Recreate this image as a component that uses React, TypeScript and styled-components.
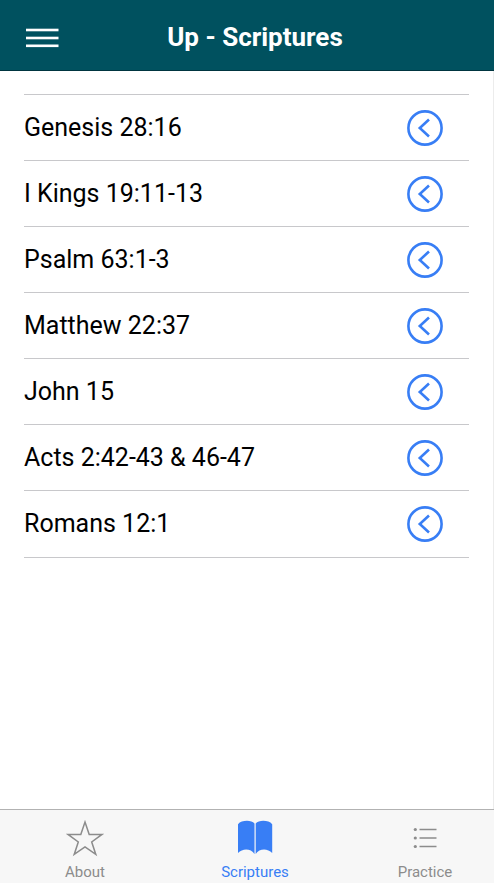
import React from "react";
import styled, { createGlobalStyle } from "styled-components";

const GlobalStyle = createGlobalStyle`
  * { box-sizing: border-box; }
  body {
    margin: 0;
    background: #fff;
    color: #000;
    font-family: Roboto, "Liberation Sans", sans-serif;
  }
`;

const Page = styled.div`
  display: flex;
  flex-direction: column;
  min-height: 100vh;
  overflow: hidden;
`;

const Header = styled.header`
  display: grid;
  grid-template-columns: 64px 1fr 64px;
  align-items: center;
  height: 71px;
  padding: 6px 16px 0;
  margin-right: -16px;
  background: #00515f;
  border-bottom: 1px solid #003540;
`;

const MenuButton = styled.button`
  display: flex;
  width: 52px;
  height: 52px;
  padding: 0 0 0 10px;
  align-items: center;
  border: 0;
  background: transparent;
  color: #fff;
  cursor: pointer;
`;

const Title = styled.h1`
  margin: 0;
  padding-bottom: 3px;
  color: #fff;
  font-size: 26px;
  line-height: 32px;
  font-weight: 700;
  text-align: center;
`;

const Main = styled.main`
  flex: 1;
  padding: 23px 24px 24px;
  border-right: 1px solid #ececec;
`;

const List = styled.ul`
  margin: 0;
  padding: 0;
  list-style: none;
  border-top: 1px solid #c8c8cb;
`;

const Row = styled.li`
  border-bottom: 1px solid #c8c8cb;

  &:last-child { padding-bottom: 1px; }
`;

const RowButton = styled.button`
  display: flex;
  width: 100%;
  height: 65px;
  padding: 0 26px 0 0;
  align-items: center;
  justify-content: space-between;
  border: 0;
  background: transparent;
  color: #000;
  font: inherit;
  font-size: 25px;
  line-height: 32px;
  text-align: left;
  cursor: pointer;

  svg { color: #387ef5; flex: none; }
`;

const TabBar = styled.nav`
  display: grid;
  grid-template-columns: repeat(3, 1fr);
  height: 74px;
  margin-right: -16px;
  background: #f7f7f7;
  border-top: 1px solid #b2b2b2;
`;

const Tab = styled.a<{ $active?: boolean }>`
  display: flex;
  flex-direction: column;
  align-items: center;
  padding-top: 8px;
  gap: 4px;
  color: ${(p) => (p.$active ? "#387ef5" : "#8c8c8c")};
  font-size: 15px;
  line-height: 20px;
  text-decoration: none;
`;

const MenuIcon = () => (
  <svg width="34" height="20" viewBox="0 0 34 20" fill="currentColor" aria-hidden="true">
    <rect x="0" y="0.7" width="32.5" height="2.6" />
    <rect x="0" y="8.7" width="32.5" height="2.6" />
    <rect x="0" y="16.5" width="32.5" height="2.6" />
  </svg>
);

const BackCircle = () => (
  <svg width="36" height="36" viewBox="0 0 36 36" fill="none" stroke="currentColor" strokeWidth="2.6" aria-hidden="true">
    <circle cx="18" cy="18" r="16.6" />
    <path d="M22 9.5 12.8 18l9.2 8.5" />
  </svg>
);

const StarIcon = () => (
  <svg width="40" height="40" viewBox="0 0 40 40" fill="none" stroke="currentColor" strokeWidth="1.5" aria-hidden="true">
    <path d="M20 4 24.2 16.4H37L26.7 24 30.8 36.4 20 28.8 9.2 36.4 13.3 24 3 16.4H15.8Z" />
  </svg>
);

const BookIcon = () => (
  <svg width="40" height="40" viewBox="0 0 40 40" fill="currentColor" aria-hidden="true">
    <path d="M19.5 5.4C16.5 1.9 6.5 1.9 3 6.2V35C7.6 30.2 15.8 30.2 19.5 36Z" />
    <path d="M20.7 5.4C23.7 1.9 33.7 1.9 37.2 6.2V35C32.6 30.2 24.4 30.2 20.7 36Z" />
  </svg>
);

const ListIcon = () => (
  <svg width="40" height="40" viewBox="0 0 40 40" fill="currentColor" aria-hidden="true">
    <circle cx="10.3" cy="11.5" r="1.6" />
    <circle cx="10.3" cy="20" r="1.6" />
    <circle cx="10.3" cy="28.5" r="1.6" />
    <path d="M14.5 10.8h17v1.4h-17zM14.5 19.3h17v1.4h-17zM14.5 27.8h17v1.4h-17z" />
  </svg>
);

const passages = [
  "Genesis 28:16",
  "I Kings 19:11-13",
  "Psalm 63:1-3",
  "Matthew 22:37",
  "John 15",
  "Acts 2:42-43 & 46-47",
  "Romans 12:1",
];

export default function App() {
  return (
    <>
      <GlobalStyle />
      <Page>
        <Header>
          <MenuButton type="button" aria-label="Menu">
            <MenuIcon />
          </MenuButton>
          <Title>Up - Scriptures</Title>
        </Header>
        <Main>
          <List>
            {passages.map((p) => (
              <Row key={p}>
                <RowButton type="button">
                  <span>{p}</span>
                  <BackCircle />
                </RowButton>
              </Row>
            ))}
          </List>
        </Main>
        <TabBar>
          <Tab href="#about"><StarIcon />About</Tab>
          <Tab href="#scriptures" $active aria-current="page"><BookIcon />Scriptures</Tab>
          <Tab href="#practice"><ListIcon />Practice</Tab>
        </TabBar>
      </Page>
    </>
  );
}
